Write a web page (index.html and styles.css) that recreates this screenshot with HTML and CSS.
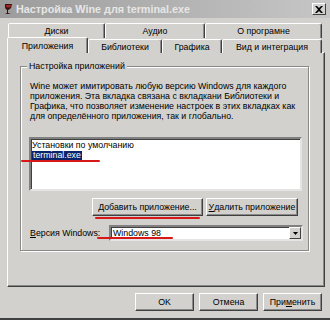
FILE: index.html
```html
<!DOCTYPE html>
<html>
<head>
<meta charset="utf-8">
<link rel="stylesheet" href="styles.css">
</head>
<body>
<div class="win">
  <div class="title">
    <svg class="ico" width="11" height="12" viewBox="0 0 11 12">
      <path d="M2 1 L9 1 L8 5 Q6 7 5 7 L5 10 L8 11 L2 11 L4 10 L4 7 Q2 6 2 4 Z" fill="#3a1010"/>
      <path d="M3 2 L8 2 L7.5 4 Q5.5 5 3.3 4 Z" fill="#a02828"/>
    </svg>
    <span class="ttext">Настройка Wine для terminal.exe</span>
    <div class="close">
      <svg width="8" height="7" viewBox="0 0 8 7"><path d="M0 0 L2 0 L4 2 L6 0 L8 0 L5 3.5 L8 7 L6 7 L4 5 L2 7 L0 7 L3 3.5 Z" fill="#000"/></svg>
    </div>
  </div>
  <div class="body">
    <div class="tabrow back">
      <div class="tab">Диски</div>
      <div class="tab">Аудио</div>
      <div class="tab">О програмне</div>
    </div>
    <div class="tabrow front">
      <div class="tab sel">Приложения</div>
      <div class="tab">Библиотеки</div>
      <div class="tab">Графика</div>
      <div class="tab">Вид и интеграция</div>
    </div>
    <div class="page">
      <div class="group">
        <div class="legend">Настройка приложений</div>
        <p class="desc">Wine может имитировать любую версию Windows для каждого приложения. Эта вкладка связана с вкладкани Библиотеки и Графика, что позволяет изменение настроек в этих вкладках как для определённого приложения, так и глобально.</p>
        <div class="list">
          <div class="item">Установки по умолчанию</div>
          <div class="item"><span class="hl">terminal.exe</span></div>
        </div>
        <div class="btnrow">
          <div class="btn add"><u>Д</u>обавить приложение...</div>
          <div class="btn del"><u>У</u>далить приложение</div>
        </div>
        <div class="verrow">
          <div class="lbl"><u>В</u>ерсия Windows:</div>
          <div class="combo">
            <span>Windows 98</span>
            <div class="arrow"><svg width="5" height="3" viewBox="0 0 5 3"><path d="M0 0 L5 0 L2.5 3 Z" fill="#000"/></svg></div>
          </div>
        </div>
      </div>
    </div>
    <div class="footer">
      <div class="btn fb">OK</div>
      <div class="btn fb">Отмена</div>
      <div class="btn fb">При<u>м</u>енить</div>
    </div>
  </div>
  <div class="red r1"></div>
  <div class="red r2"></div>
  <div class="red r3"></div>
  <div class="red r4"></div>
</div>
</body>
</html>
```
FILE: styles.css
```css
* { box-sizing: border-box; }
html, body { margin: 0; padding: 0; }
body {
  width: 330px; height: 320px; overflow: hidden;
  background: #d2d1cd;
  font-family: "Liberation Sans", Arial, sans-serif;
  font-size: 8.8px;
  color: #000;
}
.win {
  position: relative;
  width: 330px; height: 320px;
  background: #d2d1cd;
  border-bottom: 2px solid #404040;
  display: flex; flex-direction: column;
}
.title {
  height: 18px;
  display: flex; align-items: center;
  padding-left: 3px;
  background: linear-gradient(to right, #9c9c9c, #c6c6c6);
}
.ico { margin-right: 2px; }
.ttext { color: #e6e6e6; font-weight: bold; font-size: 10.8px; flex: 1; }
.close {
  width: 14px; height: 12px; margin-right: 4px;
  background: #d2d1cd;
  border: 1px solid; border-color: #fff #404040 #404040 #fff;
  display: flex; align-items: center; justify-content: center;
}
.body {
  flex: 1;
  padding: 5px 5px 0 7px;
  display: flex; flex-direction: column;
}
.tabrow { display: grid; height: 15px; padding-left: 1px; }
.tabrow.back { grid-template-columns: 97px 100px 117px; }
.tabrow.front { grid-template-columns: 80px 74px 60px 100px; height: 14px; position: relative; z-index: 1; }
.tab {
  display: flex; align-items: center; justify-content: center;
  border: 1px solid; border-bottom: none;
  border-color: #fff #404040 transparent #fff;
  border-radius: 2px 2px 0 0;
  box-shadow: inset -1px 0 0 #8a8a8a;
  background: #d2d1cd;
}
.front .tab { margin-top: 1px; }
.tab.sel { margin-top: -1px; margin-left: -1px; height: 16px; }
.page {
  height: 235px;
  border: 1px solid; border-color: #fff #404040 #404040 #fff;
  box-shadow: inset -1px -1px 0 #8a8a8a;
  padding: 13px 0 0 12px;
}
.group {
  width: 289px; height: 185px;
  border: 1px solid #8a8a8a;
  box-shadow: 1px 1px 0 #fff, inset 1px 1px 0 #fff;
  position: relative;
  padding: 14px 0 0 9px;
}
.legend {
  position: absolute; top: -6px; left: 6px;
  background: #d2d1cd; padding: 0 2px;
  line-height: 11px;
}
.desc { margin: 0; line-height: 10px; width: 275px; }
.list {
  margin-top: 16px;
  width: 273px; height: 54px;
  margin-left: -1px;
  background: #fff;
  border: 2px solid; border-color: #808080 #e4e4e4 #e4e4e4 #808080;
  box-shadow: inset 1px 1px 0 #404040;
  padding: 1px 0 0 1px;
}
.item { line-height: 10px; height: 10px; }
.hl { background: #0a246a; color: #fff; padding: 0 1px; display: inline-block; line-height: 9px; margin-top: 1px; }
.btnrow { display: flex; gap: 3px; margin-top: 7px; padding-left: 62px; height: 18px; }
.btn {
  height: 18px;
  display: flex; align-items: center; justify-content: center;
  background: #d2d1cd;
  border: 1px solid; border-color: #fff #404040 #404040 #fff;
  box-shadow: inset -1px -1px 0 #8a8a8a;
}
.btn.add { width: 111px; }
.btn.del { width: 92px; }
.verrow { display: flex; align-items: center; margin-top: 9px; height: 16px; }
.lbl { width: 79px; }
.combo {
  width: 194px; height: 16px;
  background: #fff;
  border: 2px solid; border-color: #808080 #e4e4e4 #e4e4e4 #808080;
  box-shadow: inset 1px 1px 0 #404040;
  display: flex; align-items: center; justify-content: space-between;
  padding-left: 2px;
}
.arrow {
  width: 12px; height: 12px;
  background: #d2d1cd;
  border: 1px solid; border-color: #fff #404040 #404040 #fff;
  display: flex; align-items: center; justify-content: center;
}
.footer { display: flex; justify-content: flex-end; gap: 5px; padding-top: 6px; padding-right: 3px; }
.fb { width: 59px; height: 18px; }
u { text-decoration: underline; }
.red { position: absolute; height: 2px; background: #d81818; border-radius: 1px; }
.r1 { left: 10px; top: 48px; width: 75px; }
.r2 { left: 21px; top: 160px; width: 79px; }
.r3 { left: 95px; top: 217px; width: 105px; }
.r4 { left: 97px; top: 237px; width: 76px; }
```
